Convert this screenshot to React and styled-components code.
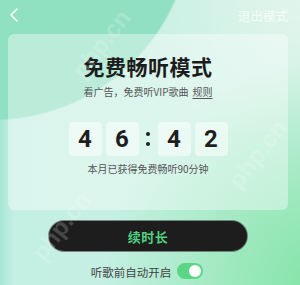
import React from 'react';
import styled, { createGlobalStyle } from 'styled-components';

const Global = createGlobalStyle`
  html, body { margin: 0; padding: 0; }
  body {
    font-family: "Noto Sans CJK SC", "Noto Sans", sans-serif;
    background: #c6efe3;
  }
`;

const Page = styled.div`
  position: relative;
  width: 300px;
  height: 285px;
  overflow: hidden;
  box-sizing: border-box;
  padding: 0 12px 0 8px;
  display: flex;
  flex-direction: column;
  background:
    radial-gradient(circle 200px at -8px -80px, #8fe0c1 0, #92e0c3 199px, rgba(143, 224, 193, 0) 201px),
    radial-gradient(circle at 330px 290px, #7ee3a2 0, rgba(126, 227, 162, 0) 230px),
    radial-gradient(circle at 300px 0px, #e2f5ec 0, rgba(226, 245, 236, 0) 170px),
    linear-gradient(90deg, #a8e6d6 0, #c4efe3 14px, #c8f0e3 100%);
`;

const Header = styled.div`
  height: 30px;
  display: flex;
  align-items: center;
  justify-content: space-between;
`;

const Back = styled.button`
  border: 0;
  background: none;
  padding: 0;
  width: 12px;
  height: 16px;
  margin-left: 2px;
  display: flex;
  align-items: center;
`;

const Exit = styled.span`
  font-size: 12.5px;
  color: rgba(255, 255, 255, 0.75);
`;

const Card = styled.div`
  margin-top: 4px;
  height: 176px;
  box-sizing: border-box;
  padding-top: 20px;
  border-radius: 6px;
  background: rgba(255, 255, 255, 0.38);
  display: flex;
  flex-direction: column;
  align-items: center;
`;

const Title = styled.h1`
  margin: 0;
  font-size: 21px;
  line-height: 25px;
  font-weight: 700;
  color: #1c1c1c;
  letter-spacing: 0.5px;
`;

const Sub = styled.p`
  margin: 6px 0 0;
  font-size: 10px;
  line-height: 14px;
  color: #555;
`;

const Rule = styled.span`
  margin-left: 4px;
  text-decoration: underline;
  text-underline-offset: 2px;
`;

const Timer = styled.div`
  margin-top: 23px;
  display: flex;
  align-items: center;
  gap: 4px;
`;

const Digit = styled.div`
  width: 33px;
  height: 34px;
  border-radius: 4px;
  background: rgba(255, 255, 255, 0.5);
  display: flex;
  align-items: center;
  justify-content: center;
  font-family: Roboto, "Liberation Sans", sans-serif;
  font-size: 24px;
  font-weight: 700;
  color: #1e1e1e;
`;

const Colon = styled.div`
  width: 11px;
  display: flex;
  flex-direction: column;
  align-items: center;
  gap: 6px;
  &::before, &::after {
    content: '';
    width: 4px;
    height: 4px;
    border-radius: 50%;
    background: #1e1e1e;
  }
`;

const Caption = styled.p`
  margin: 6px 0 0;
  font-size: 10px;
  line-height: 14px;
  color: #555;
`;

const Action = styled.button`
  margin: 11px auto 0;
  width: 198px;
  height: 30px;
  border: 0;
  border-radius: 15px;
  background: #1d1d1d;
  box-shadow: 0 0 0 1px rgba(90, 90, 90, 0.7);
  color: #4fd283;
  font-family: "Noto Sans CJK SC", sans-serif;
  font-size: 13px;
  font-weight: 700;
  letter-spacing: 0.5px;
`;

const AutoRow = styled.div`
  margin-top: 11px;
  display: flex;
  align-items: center;
  justify-content: center;
  gap: 6px;
  padding-right: 2px;
`;

const AutoText = styled.span`
  font-size: 11.5px;
  line-height: 16px;
  color: #444;
  margin-top: 2px;
`;

const Toggle = styled.div`
  width: 26px;
  height: 16px;
  border-radius: 8px;
  background: ${p => (p.$on ? '#5bd685' : '#ccc')};
  box-sizing: border-box;
  padding: 2px;
  display: flex;
  justify-content: ${p => (p.$on ? 'flex-end' : 'flex-start')};
  &::after {
    content: '';
    width: 12px;
    height: 12px;
    border-radius: 50%;
    background: #fff;
  }
`;

// faint watermark laid over the screenshot
const Mark = styled.span`
  position: absolute;
  left: ${p => p.$x}px;
  top: ${p => p.$y}px;
  transform: rotate(-52deg);
  font-family: "Liberation Sans", sans-serif;
  font-size: 24px;
  font-weight: 700;
  color: rgba(255, 255, 255, 0.2);
  pointer-events: none;
  white-space: nowrap;
`;

const digits = ['4', '6', ':', '4', '2'];

export default function App() {
  return (
    <>
      <Global />
      <Page>
        <Header>
          <Back aria-label="back">
            <svg width="8" height="14" viewBox="0 0 8 14">
              <path d="M7 1 L1 7 L7 13" fill="none" stroke="#fff" strokeWidth="1.6" strokeLinecap="round" strokeLinejoin="round" />
            </svg>
          </Back>
          <Exit>退出模式</Exit>
        </Header>
        <Card>
          <Title>免费畅听模式</Title>
          <Sub>看广告，免费听VIP歌曲<Rule>规则</Rule></Sub>
          <Timer>
            {digits.map((d, i) => (d === ':' ? <Colon key={i} /> : <Digit key={i}>{d}</Digit>))}
          </Timer>
          <Caption>本月已获得免费畅听90分钟</Caption>
        </Card>
        <Action>续时长</Action>
        <AutoRow>
          <AutoText>听歌前自动开启</AutoText>
          <Toggle $on />
        </AutoRow>
        <Mark $x={62} $y={30}>php.cn</Mark>
        <Mark $x={218} $y={140}>php.cn</Mark>
        <Mark $x={22} $y={212}>php.cn</Mark>
      </Page>
    </>
  );
}
